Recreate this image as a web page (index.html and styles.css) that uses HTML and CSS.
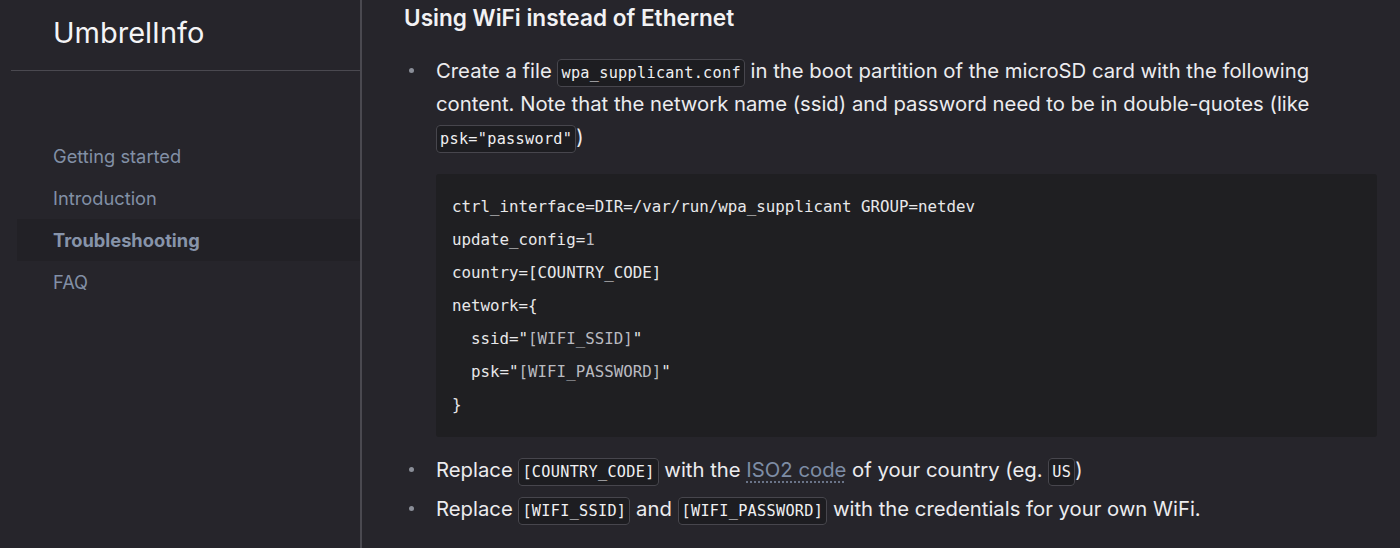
FILE: index.html
```html
<!DOCTYPE html>
<html lang="en">
<head>
<meta charset="utf-8">
<title>UmbrelInfo</title>
<link rel="stylesheet" href="styles.css">
</head>
<body>
<aside class="sidebar">
  <div class="brand">UmbrelInfo</div>
  <nav class="nav">
    <a class="nav-item">Getting started</a>
    <a class="nav-item">Introduction</a>
    <a class="nav-item active">Troubleshooting</a>
    <a class="nav-item">FAQ</a>
  </nav>
</aside>
<main class="content">
  <h3 class="heading">Using WiFi instead of Ethernet</h3>
  <ul class="list">
    <li class="item">Create a file <code class="ic">wpa_supplicant.conf</code> in the boot partition of the microSD card with the following content. Note that the network name (ssid) and password need to be in double-quotes (like <code class="ic">psk="password"</code>)
      <pre class="codeblock"><code>ctrl_interface=DIR=/var/run/wpa_supplicant GROUP=netdev
update_config=<span class="num">1</span>
country=[COUNTRY_CODE]
network={
  ssid="<span class="str">[WIFI_SSID]</span>"
  psk="<span class="str">[WIFI_PASSWORD]</span>"
}</code></pre>
    </li>
    <li class="item">Replace <code class="ic">[COUNTRY_CODE]</code> with the <a class="link">ISO2 code</a> of your country (eg. <code class="ic">US</code>)</li>
    <li class="item">Replace <code class="ic">[WIFI_SSID]</code> and <code class="ic">[WIFI_PASSWORD]</code> with the credentials for your own WiFi.</li>
  </ul>
</main>
</body>
</html>
```

FILE: styles.css
```css
html, body {
  margin: 0;
  height: 100%;
  background: #26252b;
}
body {
  display: flex;
  font-family: Inter, "Noto Sans", sans-serif;
  color: #ececef;
  overflow: hidden;
}
.sidebar {
  flex: none;
  width: 362px;
  border-right: 2px solid #4a4950;
  box-sizing: border-box;
}
.brand {
  margin-left: 11px;
  padding-left: 42px;
  height: 71px;
  box-sizing: border-box;
  padding-top: 13px;
  font-size: 29px;
  line-height: 40px;
  font-weight: 400;
  color: #f4f4f6;
  border-bottom: 1px solid #4a4950;
}
.nav {
  margin-top: 64px;
  display: flex;
  flex-direction: column;
}
.nav-item {
  display: block;
  height: 42px;
  line-height: 42px;
  margin-left: 17px;
  padding-left: 36px;
  font-size: 18.3px;
  color: #8290a6;
}
.nav-item.active {
  background: #222126;
  font-weight: 700;
  color: #8794aa;
}
.content {
  flex: 1;
  padding: 4px 23px 0 42px;
  min-width: 0;
}
.heading {
  margin: 0;
  font-size: 22.6px;
  line-height: 28px;
  font-weight: 600;
  color: #f2f2f4;
}
.list {
  margin: 22px 0 0;
  padding-left: 32px;
  list-style: none;
}
.item {
  position: relative;
  font-size: 20.3px;
  letter-spacing: 0;
  line-height: 33px;
  margin-bottom: 6px;
}
.item::before {
  content: "";
  position: absolute;
  left: -27px;
  top: 14px;
  width: 5px;
  height: 5px;
  border-radius: 50%;
  background: #8a8e98;
}
.ic {
  font-family: "DejaVu Sans Mono", monospace;
  font-size: 15.2px;
  line-height: 1;
  letter-spacing: 0.3px;
  padding: 4px 3px;
  border: 1px solid #47464d;
  border-radius: 4px;
  background: #1d1d21;
  color: #f0f0f2;
}
.codeblock {
  margin: 21px 0 16px;
  padding: 16px 16px;
  background: #1f1f22;
  border-radius: 3px;
  font-family: "DejaVu Sans Mono", monospace;
  font-size: 15.8px;
  letter-spacing: 0;
  line-height: 33px;
  color: #e8e8ea;
  white-space: pre;
}
.num, .str {
  color: #b9bac0;
}
.link {
  color: #7e8da5;
  text-decoration: underline dotted #6a7488;
  text-underline-offset: 4px;
}
```
